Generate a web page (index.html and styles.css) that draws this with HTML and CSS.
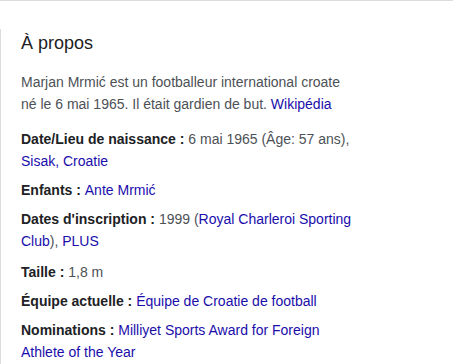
FILE: index.html
```html
<!DOCTYPE html>
<html lang="fr">
<head>
    <meta charset="UTF-8">
    <meta name="viewport" content="width=device-width, initial-scale=1.0">
    <link rel="stylesheet" href="styles.css">
    <title>À propos</title>
</head>
<body>
    <div class="page">
        <div class="panel">
            <h2 class="panel-title">À propos</h2>
            <p class="description">Marjan Mrmić est un footballeur international croate né le 6 mai 1965. Il était gardien de but. <a href="#">Wikipédia</a></p>

            <div class="fact"><span class="label">Date/Lieu de naissance : </span>6 mai 1965 (Âge: 57 ans), <a href="#">Sisak, Croatie</a></div>
            <div class="fact"><span class="label">Enfants : </span><a href="#">Ante Mrmić</a></div>
            <div class="fact"><span class="label">Dates d'inscription : </span>1999 (<a href="#">Royal Charleroi Sporting Club</a>), <a href="#">PLUS</a></div>
            <div class="fact fact-gap"><span class="label">Taille : </span>1,8 m</div>
            <div class="fact"><span class="label">Équipe actuelle : </span><a href="#">Équipe de Croatie de football</a></div>
            <div class="fact"><span class="label">Nominations : </span><a href="#">Milliyet Sports Award for Foreign Athlete of the Year</a></div>
        </div>
    </div>
</body>
</html>
```

FILE: styles.css
```css
body {
    margin: 0;
    padding: 0;
    background-color: #ffffff;
    font-family: "Liberation Sans", Arial, sans-serif;
}

/* Thin rule at the very top of the page */
.page {
    border-top: 1px solid #dadce0;
    padding-top: 28px;
}

/* Knowledge panel with its left rule */
.panel {
    border-left: 1px solid #dadce0;
    padding: 2px 0 20px 20px;
    width: 334px;
}

.panel-title {
    font-size: 18px;
    line-height: 24px;
    font-weight: normal;
    color: #202124;
    margin: 0 0 16px 0;
}

.description {
    font-size: 14px;
    line-height: 22px;
    color: #4d5156;
    margin: 0 0 13px 0;
}

.fact {
    font-size: 14px;
    line-height: 22px;
    color: #4d5156;
    margin-top: 7px;
}

.fact-gap {
    margin-top: 9px;
}

.label {
    font-weight: bold;
    color: #202124;
}

a {
    color: #1a0dab;
    text-decoration: none;
}
```
